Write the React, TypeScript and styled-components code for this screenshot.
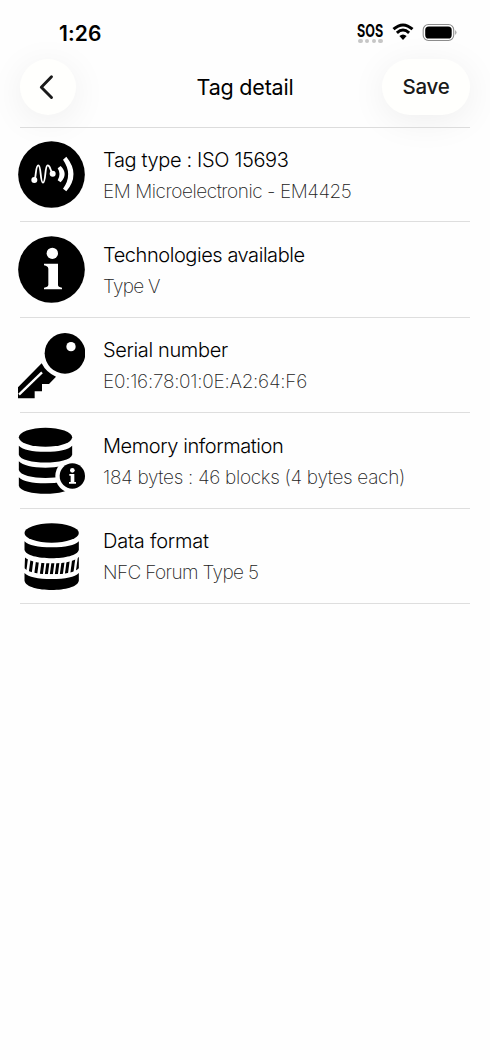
import React from "react";
import styled, { createGlobalStyle } from "styled-components";

const GlobalStyle = createGlobalStyle`
  * { box-sizing: border-box; }
  html, body { margin: 0; background: #fefefe; }
  body { font-family: Inter, "Liberation Sans", sans-serif; color: #000; overflow: hidden; }
`;

const Screen = styled.div`
  width: 490px;
  height: 1060px;
  background: #fefefe;
  display: flex;
  flex-direction: column;
  overflow: hidden;
`;

const StatusBar = styled.div`
  height: 59px;
  flex: none;
  display: flex;
  align-items: flex-start;
  justify-content: space-between;
  padding: 20px 33px 0 59px;
`;

const Clock = styled.span`
  font-size: 21px;
  line-height: 27px;
  font-weight: 600;
  letter-spacing: 0.1px;
`;

const StatusIcons = styled.div`
  display: flex;
  align-items: flex-start;
  padding-top: 2px;
`;

const Sos = styled.div`
  width: 27px;
  display: flex;
  flex-direction: column;
  align-items: center;
  margin-right: 8px;
`;

const SosText = styled.span`
  font-size: 17.5px;
  line-height: 17px;
  font-weight: 700;
  transform: scaleX(0.72);
  white-space: nowrap;
`;

const SosDots = styled.div`
  display: flex;
  gap: 2.4px;
`;

const Dot = styled.i`
  width: 4.3px;
  height: 4.3px;
  border-radius: 50%;
  background: #c6c6c6;
`;

const NavBar = styled.header`
  height: 68px;
  flex: none;
  display: grid;
  grid-template-columns: 88px 1fr 88px;
  align-items: start;
  padding: 0 20px;
`;

const GlassButton = styled.button<{ $width: number }>`
  width: ${(p) => p.$width}px;
  height: 56px;
  padding: 0;
  border: 0;
  border-radius: 28px;
  background: #fffffd;
  box-shadow: 0 6px 36px rgba(0, 0, 0, 0.065);
  display: flex;
  align-items: center;
  justify-content: center;
  font: 500 20.5px/26px Inter, "Liberation Sans", sans-serif;
  letter-spacing: -0.25px;
  color: #1a1a1a;
`;

const Title = styled.h1`
  margin: 0;
  text-align: center;
  font-size: 21.5px;
  line-height: 56px;
  font-weight: 400;
  letter-spacing: -0.2px;
`;

const List = styled.ul`
  list-style: none;
  margin: 0 20px;
  padding: 0;
  border-top: 1px solid #dcdcdc;
`;

const Row = styled.li`
  height: 95.4px;
  display: flex;
  align-items: flex-start;
  background: linear-gradient(#dedede, #dedede) 0 100% / 100% 1px no-repeat;
  &:first-child { height: 94.4px; }
  &:first-child > * { margin-top: -1px; }
`;

const IconBox = styled.div`
  width: 67px;
  margin-left: -2px;
  padding-top: 14px;
  flex: none;
  svg { display: block; width: 67px; height: 67px; }
`;

const Texts = styled.div`
  padding: 19.5px 0 0 18px;
  white-space: nowrap;
`;

const RowTitle = styled.div<{ $track: number }>`
  font-size: 20px;
  line-height: 26px;
  font-weight: 300;
  letter-spacing: ${(p) => p.$track}px;
  color: #000;
`;

const RowValue = styled.div<{ $track: number }>`
  margin-top: 6px;
  font-size: 19px;
  line-height: 26px;
  font-weight: 200;
  letter-spacing: ${(p) => p.$track}px;
  color: #222;
`;

const TagIcon = () => (
  <svg viewBox="54 63 201 201" fill="none">
    <circle cx="154.500" cy="163.500" r="100" fill="#000" />
    <path
      d="M103 180C109 172 106 136 115 136C124 136 120 188 129 188C138 188 134 136 143 136C151 136 150 150 158 161"
      stroke="#fff"
      strokeWidth="5.500"
      strokeLinecap="round"
    />
    <circle cx="103" cy="180" r="9" fill="#fff" />
    <circle cx="158" cy="161" r="9" fill="#fff" />
    <path d="M182 138Q206 162 182 187L173 181Q184 162 173 145Z" fill="#fff" />
    <path d="M199 110Q242 163 199 214L189 206Q220 163 189 119Z" fill="#fff" />
  </svg>
);

const InfoIcon = () => (
  <svg viewBox="24 34 201 201">
    <circle cx="124.500" cy="134.500" r="100" />
    <circle cx="127" cy="86" r="17" fill="#fff" />
    <path d="M102 117H144V181Q144 188 156 189V194H102V189Q114 188 115 181V132Q114 124 102 122Z" fill="#fff" />
  </svg>
);

const KeyIcon = () => (
  <svg viewBox="24 35 201 201">
    <circle cx="165" cy="99" r="61" />
    <circle cx="183" cy="79" r="14" fill="#fff" />
    <path d="M95 129Q109 157 138 169L117 191H96V213H74V234H24V201Z" />
    <path d="M27 223L96 156" stroke="#fff" strokeWidth="7" />
  </svg>
);

const MemoryIcon = () => (
  <svg viewBox="24 36 201 201">
    <ellipse cx="106.500" cy="67" rx="80" ry="28.500" />
    <path d="M26.500 92Q45 110 106.500 110T186.500 92V119C180 150 33 150 26.500 119Z" />
    <path d="M26.500 139Q45 158 106.500 158Q165 158 186.500 139V165C180 197 33 197 26.500 165Z" />
    <path d="M26.500 187Q45 205 106.500 205Q165 205 186.500 187V212C180 244 33 244 26.500 212Z" />
    <circle cx="187" cy="183" r="51" fill="#fefefe" />
    <circle cx="187" cy="183" r="38" />
    <circle cx="187" cy="166" r="7" fill="#fff" />
    <path d="M178 177H193V201H198V206H177V201H182V182H178Z" fill="#fff" />
  </svg>
);

const slats = [46, 63, 80, 97, 112, 127, 142, 157, 172, 188, 204];

const DataIcon = () => (
  <svg viewBox="24 38 201 201">
    <ellipse cx="125" cy="68" rx="81.500" ry="29" />
    <path d="M43.500 93Q62 111 125 111T206.500 93V118C200 152 50 152 43.500 118Z" />
    <path d="M43.500 188Q62 206 125 206T206.500 188V211C200 248 50 248 43.500 211Z" />
    <clipPath id="band">
      <path d="M43.500 140Q62 159 125 159T206.500 140V174Q188 192 125 192T43.500 174Z" />
    </clipPath>
    <g clipPath="url(#band)" stroke="#000" strokeWidth="9">
      {slats.map((x) => (
        <path key={x} d={`M${x - 4} 200L${x + 4} 140`} />
      ))}
    </g>
  </svg>
);

const rows = [
  { icon: <TagIcon />, title: "Tag type : ISO 15693", value: "EM Microelectronic - EM4425", t: -0.35, v: -0.46 },
  { icon: <InfoIcon />, title: "Technologies available", value: "Type V", t: -0.44, v: -0.75 },
  { icon: <KeyIcon />, title: "Serial number", value: "E0:16:78:01:0E:A2:64:F6", t: -0.36, v: -0.26 },
  { icon: <MemoryIcon />, title: "Memory information", value: "184 bytes : 46 blocks (4 bytes each)", t: -0.42, v: -0.31 },
  { icon: <DataIcon />, title: "Data format", value: "NFC Forum Type 5", t: -0.22, v: -0.63 },
];

export default function App() {
  return (
    <Screen>
      <GlobalStyle />
      <StatusBar>
        <Clock>1:26</Clock>
        <StatusIcons>
          <Sos>
            <SosText>SOS</SosText>
            <SosDots><Dot /><Dot /><Dot /><Dot /></SosDots>
          </Sos>
          <svg width="65" height="20" viewBox="0 0 65 20" fill="none">
            <path d="M1.500 7.200Q11 -1.300 20.500 7.200" stroke="#000" strokeWidth="3" />
            <path d="M4.900 10.800Q11 5.300 17.100 10.800" stroke="#000" strokeWidth="3" />
            <path d="M7.400 14Q11 10.800 14.600 14L11 17.900Z" fill="#000" />
            <rect x="31.200" y="2.500" width="30.500" height="16" rx="5.200" stroke="#8d8d8d" strokeWidth="1.100" />
            <rect x="33.200" y="4.500" width="26.500" height="12" rx="3.600" fill="#000" />
            <path d="M63.300 8Q65.500 10.500 63.300 13Z" fill="#8d8d8d" />
          </svg>
        </StatusIcons>
      </StatusBar>
      <NavBar>
        <GlassButton $width={56} aria-label="Back">
          <svg width="20" height="28" viewBox="0 0 20 28" fill="none" stroke="#1a1a1a" strokeWidth="2.900" strokeLinecap="round" strokeLinejoin="round">
            <path d="M13.500 3.800L3.300 14.200L13.500 24.500" />
          </svg>
        </GlassButton>
        <Title>Tag detail</Title>
        <GlassButton $width={88}>Save</GlassButton>
      </NavBar>
      <List>
        {rows.map((r) => (
          <Row key={r.title}>
            <IconBox>{r.icon}</IconBox>
            <Texts>
              <RowTitle $track={r.t}>{r.title}</RowTitle>
              <RowValue $track={r.v}>{r.value}</RowValue>
            </Texts>
          </Row>
        ))}
      </List>
    </Screen>
  );
}
